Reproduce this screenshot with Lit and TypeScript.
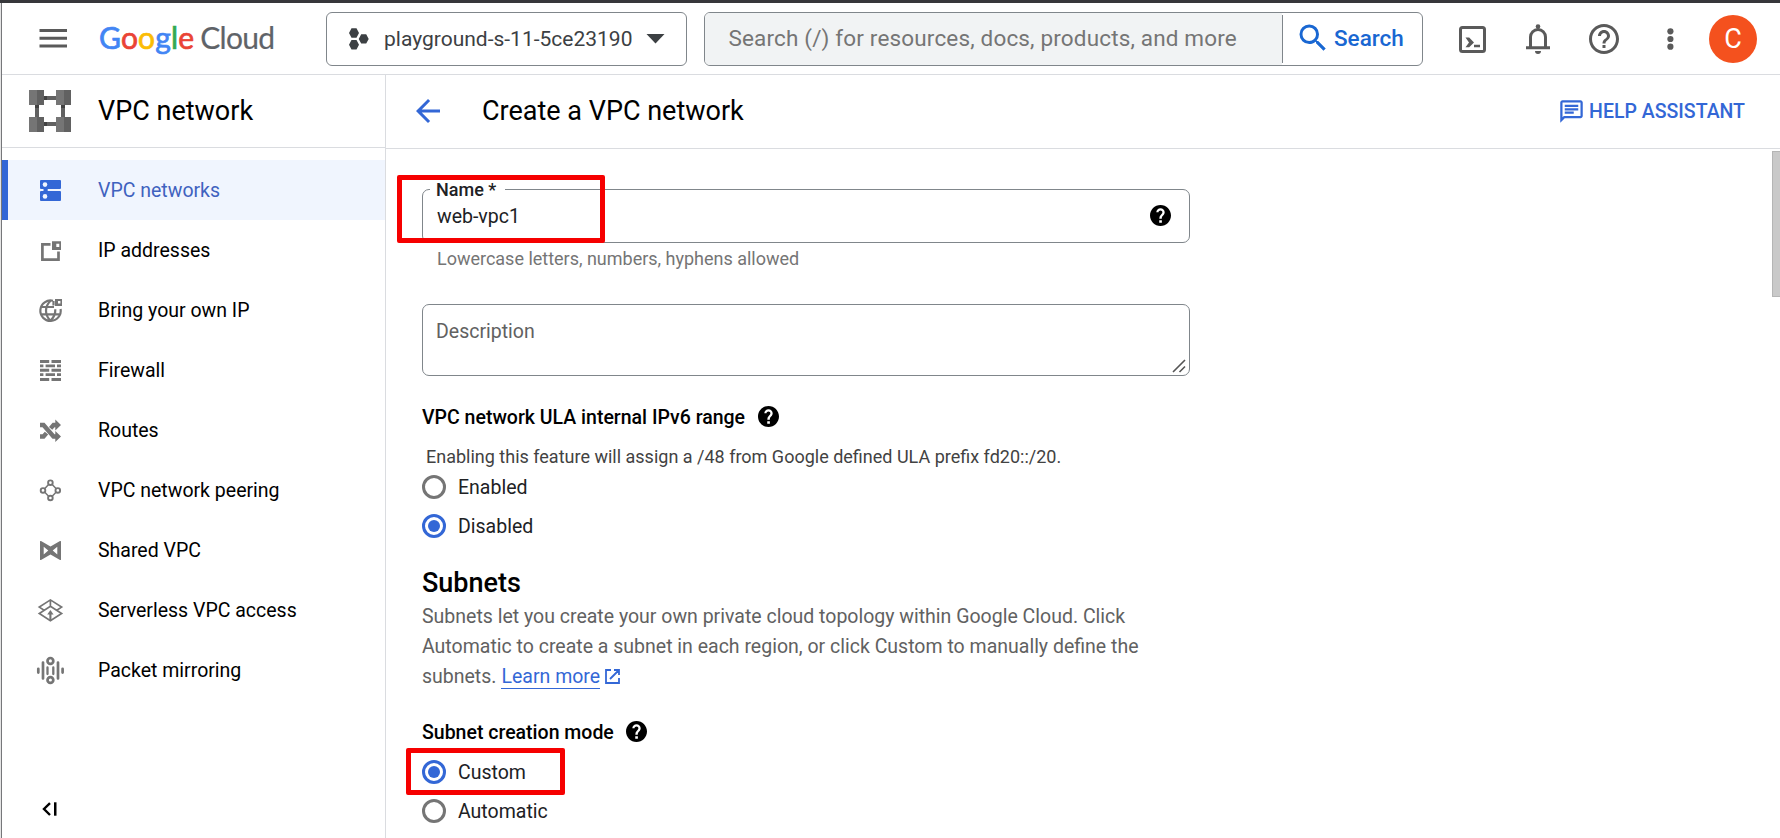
import { LitElement, html, css, svg } from "lit";
import { customElement } from "lit/decorators.js";

const icons: Record<string, unknown> = {
  networks: svg`<path d="M5 4h19a1 1 0 0 1 1 1v7a1 1 0 0 1-1 1H11.700v2H24a1 1 0 0 1 1 1v8a1 1 0 0 1-1 1H5a1 1 0 0 1-1-1v-8a1 1 0 0 1 1-1h2.500v-2H5a1 1 0 0 1-1-1V5a1 1 0 0 1 1-1z"/><circle cx="9" cy="8.600" r="2.300" fill="#f0f5fe"/><circle cx="9" cy="20.400" r="2.300" fill="#f0f5fe"/>`,
  addresses: svg`<path d="M14.500 8.400H6.400v15.200h16.100v-8" fill="none" stroke="currentColor" stroke-width="2.700"/><path fill-rule="evenodd" d="M16 5.200h9v8.800h-9zM20.300 7.700v3.200h3V7.700z"/>`,
  byoip: svg`<g fill="none" stroke="currentColor" stroke-width="2.200"><path d="M17 4.800A10.200 10.200 0 1 0 24.600 13"/><path d="M17.500 9.500V5M14.500 4.800c-6 6-6 14 0 20M14.500 24.800c3.600-3.600 5-7.500 4.800-11.500M5.500 11h12.500M5.500 18.300h18"/></g><path fill-rule="evenodd" d="M19 3h7v7h-7zM22 5v2.500h2.400V5z"/>`,
  firewall: svg`<path d="M4 4h9.200v3H4zM15.500 4H25v3h-9.500zM4 8.400h3.400v2.800H4zM9.600 8.400H19v2.800H9.600zM21 8.400h4v2.800h-4zM4 12.800h9.200v3H4zM15.500 12.800H25v3h-9.500zM4 17.200h3.400v2.800H4zM9.600 17.200H19v2.800H9.600zM21 17.200h4v2.800h-4zM4 22h9.200v3H4zM15.500 22H25v3h-9.500z"/>`,
  routes: svg`<g fill="none" stroke="currentColor" stroke-width="4.400"><path d="M4 9h3.500l10 11.500H20M4 20.500h3.500l3-3.400M14.600 12.400l3-3.400H20"/></g><path d="M19.300 3.600l5.700 5.400-5.700 5.400zM19.300 15.100l5.700 5.400-5.700 5.400z"/>`,
  peering: svg`<g fill="none" stroke="currentColor" stroke-width="1.900"><circle cx="14.400" cy="6.700" r="2.300"/><circle cx="7" cy="14.400" r="2.300"/><circle cx="21.800" cy="14.400" r="2.300"/><circle cx="14.400" cy="22" r="2.300"/><path d="M12.600 8.500l-3.800 4M16.200 8.500l3.800 4M8.800 16.200l3.800 4M20 16.200l-3.800 4" stroke-width="1.500"/></g>`,
  shared: svg`<path fill-rule="evenodd" d="M4 5.600q0-1 1-.6l9.500 5.600L24 5q1-.4 1 .6v17.800q0 1-1 .6l-9.500-5.600L5 24q-1 .4-1-.6zM7.700 10.800v7.600l4.600-3.800zM21.300 10.800v7.600l-4.600-3.800z"/>`,
  serverless: svg`<g fill="none" stroke="currentColor" stroke-width="1.700"><path d="M8.500 14.500L3.300 11.100 14.400 3.900l11.200 7.200-5.200 3.400M14.400 4v6.300M14.400 10.300l11.200 7.200-11.200 7.300-11.100-7.300z"/><path d="M14.400 24.500v-7" stroke-width="2.100"/></g><path d="M14.400 14l3.200 4.500h-6.400z"/>`,
  mirroring: svg`<g fill="none" stroke="currentColor" stroke-width="2.700"><circle cx="14.400" cy="4.900" r="2.900"/><circle cx="14.400" cy="24" r="2.900"/><g stroke-linecap="round"><path d="M2.300 12.800v3.800M7 6.500v16M22 6.500v16M26.600 12.800v3.800"/><path d="M11.500 11.500v6.500M17.300 11.500v6.500" stroke-width="2.300"/></g></g>`,
};

interface NavItem { icon: string; label: string }

@customElement("help-dot")
export class HelpDot extends LitElement {
  static styles = css`
    :host { display: block; width: 21px; height: 21px; color: #000; }
    svg { display: block; }
  `;
  render() {
    return html`<svg width="21" height="21" viewBox="2 2 20 20"><path d="M12 2C6.480 2 2 6.480 2 12s4.480 10 10 10 10-4.480 10-10S17.520 2 12 2zm1.300 17h-2.500v-2.500h2.500V19zm1.900-7.700l-.9.9c-.7.7-1.100 1.300-1.100 2.800h-2.300v-.5c0-1.100.4-2.100 1.100-2.800l1.200-1.300c.4-.3.6-.8.6-1.400 0-1.100-.8-1.800-1.800-1.800s-1.900.7-1.900 1.800H8c0-2.200 1.800-3.900 4-3.900s4 1.700 4 3.900c0 .9-.3 1.700-.8 2.300z"/></svg>`;
  }
}

@customElement("radio-row")
export class RadioRow extends LitElement {
  static properties = { label: {}, checked: { type: Boolean } };
  declare label: string;
  declare checked: boolean;
  static styles = css`
    :host { display: flex; align-items: center; gap: 12px; height: 24px; font-size: 19.5px; color: #202124; }
    svg { display: block; color: #757575; }
    svg.on { color: #3367d6; }
  `;
  render() {
    return html`<svg class=${this.checked ? "on" : ""} width="24" height="24"><circle cx="12" cy="12" r="10.500" fill="none" stroke="currentColor" stroke-width="3"/>${this.checked ? svg`<circle cx="12" cy="12" r="6" fill="currentColor"/>` : ""}</svg><span>${this.label}</span>`;
  }
}

@customElement("app-root")
export class AppRoot extends LitElement {
  private nav: NavItem[] = [
    { icon: "networks", label: "VPC networks" },
    { icon: "addresses", label: "IP addresses" },
    { icon: "byoip", label: "Bring your own IP" },
    { icon: "firewall", label: "Firewall" },
    { icon: "routes", label: "Routes" },
    { icon: "peering", label: "VPC network peering" },
    { icon: "shared", label: "Shared VPC" },
    { icon: "serverless", label: "Serverless VPC access" },
    { icon: "mirroring", label: "Packet mirroring" },
  ];

  static styles = css`
    :host { display: block; width: 1780px; height: 838px; overflow: hidden; background: #fff; font-family: Roboto, "Liberation Sans", sans-serif; font-size: 19.5px; color: #202124; }
    * { box-sizing: border-box; }
    svg { display: block; flex: none; overflow: visible; fill: currentColor; }
    .frame { height: 838px; border-top: 3px solid #37373b; position: relative; display: flex; }
    .edge { width: 2px; flex: none; background: linear-gradient(90deg, #e4e4e4 50%, #76777a 50%); }
    .app { flex: 1; min-width: 0; display: flex; flex-direction: column; }
    header { height: 72px; flex: none; border-bottom: 1px solid #dadce0; padding: 9px 23px 0 37px; display: flex; align-items: flex-start; }
    header > * { height: 54px; display: flex; align-items: center; flex: none; }
    .burger { width: 28px; height: 52px; color: #5a5a5a; }
    .logo { height: 49px; margin-left: 32px; width: 227px; font-family: Lato, sans-serif; font-size: 30px; white-space: nowrap; }
    .google { letter-spacing: .15px; -webkit-text-stroke: .7px; }
    .b { color: #4285f4; } .r { color: #ea4335; } .y { color: #fbbc04; } .gr { color: #34a853; }
    .c { color: #5f6368; margin-left: 6px; letter-spacing: -.7px; -webkit-text-stroke: .2px; }
    .project { width: 361px; border: 1px solid #80868b; border-radius: 6px; padding: 0 21px; color: #3c4043; font-size: 21px; }
    .project span { margin-left: 15px; flex: 1; }
    .search { margin-left: 17px; width: 719px; border: 1px solid #80868b; border-radius: 6px; overflow: hidden; font-size: 22.5px; }
    .query { flex: 1; height: 100%; background: #f1f3f4; display: flex; align-items: center; padding: 0 0 3px 23.5px; color: #757575; letter-spacing: .16px; }
    .go { width: 140px; height: 48px; border-left: 1px solid #80868b; display: flex; align-items: center; padding: 0 0 2px 12px; gap: 3px; color: #1967d2; font-weight: 500; }
    .tools { margin-left: 36px; color: #5a5a5a; }
    .bell { margin-left: 40px; }
    .help { margin-left: 36px; }
    .dots { margin-left: 45px; }
    .avatar { width: 48px; height: 48px; border-radius: 50%; background: #f4511e; color: #fff; font-size: 27px; display: flex; align-items: center; justify-content: center; margin-left: 36px; }
    .body { flex: 1; display: flex; min-height: 0; }
    aside { width: 384px; flex: none; border-right: 1px solid #dadce0; display: flex; flex-direction: column; }
    .product { height: 73px; border-bottom: 1px solid #dadce0; display: flex; align-items: center; padding-left: 27px; gap: 27px; font-size: 27px; color: #000; margin-bottom: 12px; }
    .item { height: 60px; display: flex; align-items: center; padding-left: 34px; gap: 34px; color: #000; }
    .item svg { color: #757575; }
    .item.sel { background: #f0f5fe; border-left: 6px solid #3367d6; padding-left: 28px; color: #3f62bf; }
    .item.sel svg { color: #3367d6; }
    .collapse { margin: auto 0 22px 40px; color: #000; }
    main { flex: 1; min-width: 0; }
    .bar { height: 74px; border-bottom: 1px solid #dadce0; display: flex; align-items: center; padding: 0 35px 1px 24px; color: #3367d6; }
    .bar h1 { margin: 0 auto 0 36px; font-size: 27px; font-weight: 400; color: #000; }
    .assist { display: flex; align-items: center; gap: 4.5px; font-weight: 500; padding-top: 1px; }
    .scroll { display: flex; justify-content: space-between; align-items: flex-start; }
    .form { width: 768px; margin-left: 36px; padding-top: 40px; }
    .thumb { width: 8px; height: 146px; margin-top: 2px; background: #c9c9c9; border: 1px solid #b5b5b5; border-right: 0; }
    .field { position: relative; height: 54px; border: 1px solid #80868b; border-radius: 7px; display: flex; align-items: center; justify-content: space-between; padding: 0 18px 0 14px; }
    .field label { position: absolute; left: 7px; top: -12px; background: #fff; padding: 0 6px; width: 75px; height: 24px; line-height: 24px; font-size: 18px; font-weight: 500; color: #202124; white-space: nowrap; }
    help-dot { margin-bottom: 2px; }
    .hint { margin: 4px 0 0 15px; line-height: 24px; font-size: 18px; letter-spacing: -.01px; color: #757575; }
    .area { margin-top: 33px; height: 72px; border: 1px solid #80868b; border-radius: 7px; padding: 12px 4px 3px 13px; line-height: 30px; color: #616161; display: flex; justify-content: space-between; }
    .area svg { align-self: flex-end; }
    .legend { display: flex; align-items: center; gap: 12.5px; height: 24px; font-weight: 500; color: #000; }
    .ula { margin-top: 29px; }
    .note { margin: 16px 0 6px 4px; line-height: 24px; font-size: 18px; color: #424242; }
    .second { margin-top: 15px; }
    h2 { margin: 27px 0 1px; font-size: 27px; line-height: 36px; font-weight: 500; color: #000; }
    .para { line-height: 30px; color: #616161; white-space: nowrap; }
    .more { display: flex; }
    .more a { margin-left: 5px; color: #3367d6; border-bottom: 1px solid #3367d6; height: 27px; }
    .more svg { margin: 7px 0 0 5px; color: #3367d6; }
    .mode { margin: 28px 0 16px; }
    .mark { position: absolute; border: 5px solid #f60000; border-radius: 2px; }
    .mark-name { left: 397px; top: 172px; width: 208px; height: 68px; }
    .mark-custom { left: 406px; top: 745px; width: 159px; height: 47px; }
  `;

  render() {
    return html`
      <div class="frame">
        <div class="edge"></div>
        <div class="app">
          <header>
            <div class="burger"><svg width="28" height="19"><path d="M.5 0H28v3H.5zM.5 7.800H28v3H.5zM.5 15.500H28v3H.5z"/></svg></div>
            <div class="logo"><span class="google"><span class="b">G</span><span class="r">o</span><span class="y">o</span><span class="b">g</span><span class="gr">l</span><span class="r">e</span></span><span class="c">Cloud</span></div>
            <div class="project">
              <svg width="21" height="22"><path d="M3.500 .3h5l2.500 4.700-2.500 4.700h-5L1 5zM13.200 6.200h5l2.500 4.700-2.500 4.700h-5L10.700 10.900zM3.500 12h5l2.500 4.700-2.500 4.700h-5L1 16.700z"/></svg>
              <span>playground-s-11-5ce23190</span>
              <svg width="19" height="10"><path d="M.5 0h18L9.500 9.500z"/></svg>
            </div>
            <div class="search">
              <div class="query">Search (/) for resources, docs, products, and more</div>
              <div class="go"><svg width="36" height="36" viewBox="0 0 24 24"><path d="M15.500 14h-.79l-.28-.27A6.471 6.471 0 0 0 16 9.500 6.500 6.500 0 1 0 9.500 16c1.610 0 3.090-.59 4.230-1.570l.27.28v.79l5 4.990L20.490 19l-4.990-5zm-6 0C7.010 14 5 11.990 5 9.500S7.010 5 9.500 5 14 7.010 14 9.500 11.990 14 9.500 14z"/></svg>Search</div>
            </div>
            <div class="tools">
              <svg width="27" height="27"><rect x="1.500" y="1.500" width="24" height="24" rx="2" fill="none" stroke="currentColor" stroke-width="3"/><path d="M6.500 11.500h3.700l4.800 4.900-4.800 4.900H6.500l3.500-4.900zM15 18.700h6v2.600h-6z"/></svg>
              <svg class="bell" width="24" height="30"><path d="M4.500 23.500V13a7.500 7.500 0 0 1 15 0v10.500" fill="none" stroke="currentColor" stroke-width="3"/><path d="M0 22.300h24v3H0zM9 27h6a3 3 0 0 1-6 0z"/><circle cx="12" cy="2.600" r="2.300"/></svg>
              <svg class="help" width="36" height="36" viewBox="0 0 24 24"><path d="M11 18h2v-2h-2v2zm1-16C6.480 2 2 6.480 2 12s4.480 10 10 10 10-4.480 10-10S17.520 2 12 2zm0 18c-4.410 0-8-3.590-8-8s3.590-8 8-8 8 3.590 8 8-3.590 8-8 8zm0-14c-2.210 0-4 1.790-4 4h2c0-1.100.9-2 2-2s2 .9 2 2c0 2-3 1.750-3 5h2c0-2.250 3-2.500 3-5 0-2.210-1.790-4-4-4z"/></svg>
              <svg class="dots" width="6" height="22"><circle cx="3.400" cy="3.300" r="3.100"/><circle cx="3.400" cy="11" r="3.100"/><circle cx="3.400" cy="18.700" r="3.100"/></svg>
              <div class="avatar">C</div>
            </div>
          </header>
          <div class="body">
            <aside>
              <div class="product">
                <svg width="42" height="42"><path fill="#616161" d="M6 14h4v14H6zM32 14h4v14h-4zM14 6h14v4H14zM14 32h14v4H14z"/><path fill="#424242" d="M6 14h4v4H6zM32 14h4v4h-4zM14 6h4v4h-4zM14 32h4v4h-4z"/><path fill="#757575" d="M0 0h8v15H0zM27 0h8v15h-8zM0 27h8v15H0zM27 27h8v15h-8z"/><path fill="#616161" d="M8 0h7v15H8zM35 0h7v15h-7zM8 27h7v15H8zM35 27h7v15h-7z"/></svg>
                <span>VPC network</span>
              </div>
              ${this.nav.map((n, i) => html`<div class="item ${i === 0 ? "sel" : ""}"><svg width="28" height="28">${icons[n.icon]}</svg><span>${n.label}</span></div>`)}
              <div class="collapse"><svg width="15" height="14"><path d="M8 1.200L2 7l6 6" fill="none" stroke="currentColor" stroke-width="2.400"/><path d="M12 .3h2.500v13.400H12z"/></svg></div>
            </aside>
            <main>
              <div class="bar">
                <svg width="36" height="36" viewBox="0 0 24 24"><path d="M20 11H7.830l5.590-5.590L12 4l-8 8 8 8 1.410-1.410L7.830 13H20v-2z"/></svg>
                <h1>Create a VPC network</h1>
                <div class="assist"><svg width="27" height="27" viewBox="0 0 24 24"><path d="M4 4h16v12H5.170L4 17.170V4m0-2c-1.100 0-1.990.9-1.990 2L2 22l4-4h14c1.100 0 2-.9 2-2V4c0-1.100-.9-2-2-2H4zm2 10h8v2H6v-2zm0-3h12v2H6V9zm0-3h12v2H6V6z"/></svg>HELP ASSISTANT</div>
              </div>
              <div class="scroll">
                <div class="form">
                  <div class="field"><label>Name *</label><span>web-vpc1</span><help-dot></help-dot></div>
                  <div class="hint">Lowercase letters, numbers, hyphens allowed</div>
                  <div class="area">Description<svg width="12" height="12"><path d="M0 12L12 0M6.500 12L12 6.500" fill="none" stroke="#555" stroke-width="1.600"/></svg></div>
                  <div class="legend ula">VPC network ULA internal IPv6 range<help-dot></help-dot></div>
                  <div class="note">Enabling this feature will assign a /48 from Google defined ULA prefix fd20::/20.</div>
                  <radio-row label="Enabled"></radio-row>
                  <radio-row class="second" label="Disabled" checked></radio-row>
                  <h2>Subnets</h2>
                  <div class="para">Subnets let you create your own private cloud topology within Google Cloud. Click<br />Automatic to create a subnet in each region, or click Custom to manually define the
                    <div class="more">subnets.<a>Learn more</a><svg width="15" height="15"><path d="M6 1H1v13h13V9M9 1h5v5M14 1L5 10" fill="none" stroke="currentColor" stroke-width="1.800"/></svg></div>
                  </div>
                  <div class="legend mode">Subnet creation mode<help-dot></help-dot></div>
                  <radio-row label="Custom" checked></radio-row>
                  <radio-row class="second" label="Automatic"></radio-row>
                </div>
                <div class="thumb"></div>
              </div>
            </main>
          </div>
        </div>
        <div class="mark mark-name"></div>
        <div class="mark mark-custom"></div>
      </div>`;
  }
}
